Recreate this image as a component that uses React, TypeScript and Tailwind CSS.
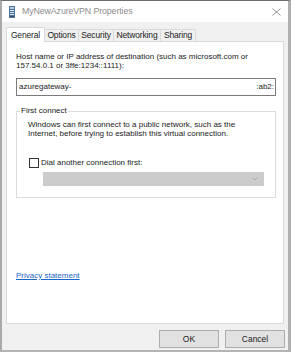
import React from "react";

export default function App() {
  const tabs: [string, number][] = [
    ["Options", 34],
    ["Security", 35],
    ["Networking", 47],
    ["Sharing", 35],
  ];
  return (
    <div
      className="w-[291px] h-[352px] bg-[#f0f0f0] border-l-2 border-r-[3px] border-t border-b-2 border-l-[#a9a9a9] border-r-[#b0b0b0] border-t-[#6e6e6e] border-b-[#b4b4b4] flex flex-col overflow-hidden text-[#222222]"
      style={{ fontFamily: '"Liberation Sans", Arial, sans-serif' }}
    >
      {/* title bar */}
      <div className="h-[21px] bg-white flex items-center pl-[7px] pr-[7px] shrink-0">
        <svg width="6" height="12" viewBox="0 0 6 12" className="mr-[7px]">
          <rect x="0" y="0" width="6" height="12" fill="#4f7299" />
          <rect x="1" y="1" width="4" height="2" fill="#b3cbe4" />
          <rect x="1" y="4" width="4" height="1" fill="#dbe6f2" />
          <rect x="1" y="6" width="4" height="1" fill="#dbe6f2" />
          <rect x="1" y="8" width="4" height="1" fill="#dbe6f2" />
          <rect x="1" y="10" width="4" height="1" fill="#2f4d72" />
        </svg>
        <span className="text-[8.8px] text-[#8c8c8c] tracking-[-0.1px]">MyNewAzureVPN Properties</span>
        <span className="ml-auto">
          <svg width="9" height="8" viewBox="0 0 9 8">
            <path d="M0.5 0.5L8.5 7.5M8.5 0.5L0.5 7.5" stroke="#8a8a8a" strokeWidth="0.9" />
          </svg>
        </span>
      </div>

      {/* tabs */}
      <div className="flex items-end pl-[4px] h-[19px] shrink-0 text-[8.5px] tracking-[-0.15px]">
        <div className="w-[39px] h-[15px] bg-white border border-b-0 border-[#d9d9d9] flex items-center justify-center relative z-10 -mb-px">
          General
        </div>
        {tabs.map(([t, w]) => (
          <div
            key={t}
            style={{ width: w }}
            className="h-[12px] bg-[#f0f0f0] border border-l-0 border-b-0 border-[#d9d9d9] flex items-center justify-center"
          >
            {t}
          </div>
        ))}
      </div>

      {/* panel */}
      <div className="ml-[4px] w-[278px] h-[283px] bg-white border border-[#d9d9d9] flex flex-col pl-[9px] pr-[7px] pt-[10px] text-[8px] shrink-0">
        <div className="leading-[9px]">
          Host name or IP address of destination (such as microsoft.com or
          <br />
          157.54.0.1 or 3ffe:1234::1111):
        </div>
        <div className="mt-[8px] h-[18px] border border-[#7a7a7a] flex items-center justify-between pl-[2px] pr-[1px]">
          <span>azuregateway-</span>
          <span>:ab2:</span>
        </div>

        <div className="mt-[15px] relative border border-[#dcdcdc] h-[87px] pl-[11px] pr-[11px] pt-[8px]">
          <span className="absolute -top-[6px] left-[3px] bg-white px-[1px] leading-[9px]">First connect</span>
          <div className="leading-[9px]">
            Windows can first connect to a public network, such as the
            <br />
            Internet, before trying to establish this virtual connection.
          </div>
          <div className="mt-[20px] flex items-center h-[10px]">
            <div className="w-[10px] h-[10px] border border-[#333333] bg-white mr-[2px] ml-[1px]" />
            <span>Dial another connection first:</span>
          </div>
          <div className="mt-[4px] ml-[15px] h-[14px] bg-[#cccccc] flex items-center justify-end pr-[6px]">
            <svg width="6" height="4" viewBox="0 0 6 4">
              <path d="M0.5 0.5L3 3L5.5 0.5" stroke="#9a9a9a" strokeWidth="0.8" fill="none" />
            </svg>
          </div>
        </div>

        <div className="mt-[73px] leading-[9px]">
          <span className="text-[#1a66c9] underline">Privacy statement</span>
        </div>
      </div>

      {/* buttons */}
      <div className="flex justify-end gap-[6px] pr-[3px] pt-[6px] text-[8.5px]">
        <div className="w-[60px] h-[18px] bg-[#e1e1e1] border border-[#adadad] flex items-center justify-center">
          OK
        </div>
        <div className="w-[60px] h-[18px] bg-[#e1e1e1] border border-[#adadad] flex items-center justify-center">
          Cancel
        </div>
      </div>
    </div>
  );
}
